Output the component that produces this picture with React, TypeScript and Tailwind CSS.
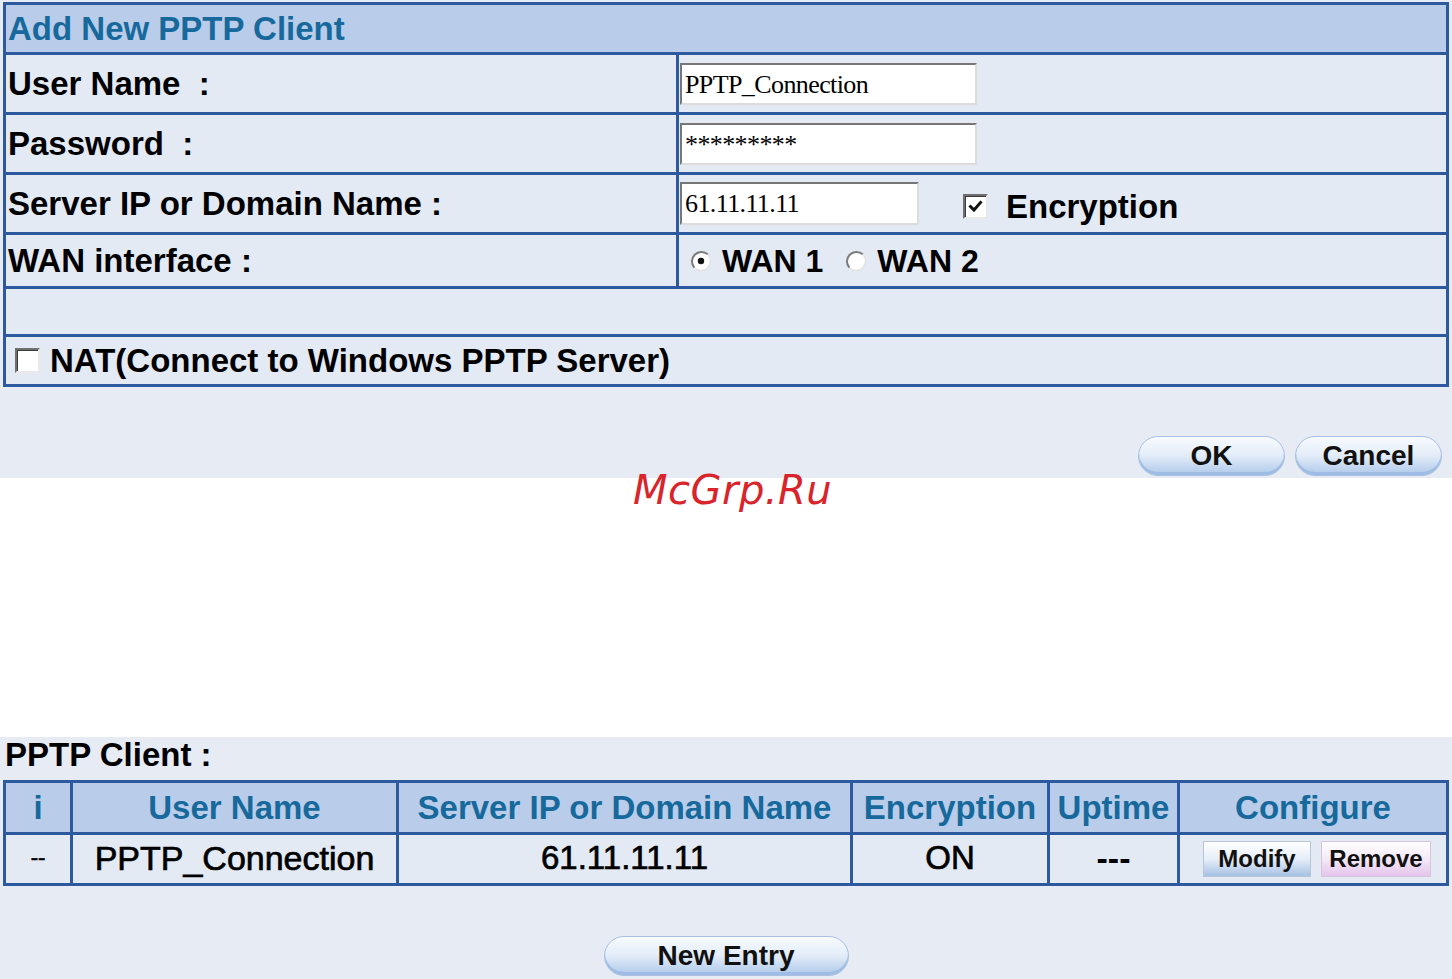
import React from 'react';

const Check = ({ checked = false }: { checked?: boolean }) => (
  <span className="inline-flex items-center justify-center w-[25px] h-[25px] shrink-0 bg-white border-[2px] border-t-[#6f6f6f] border-l-[#6f6f6f] border-b-[#e9e9e9] border-r-[#e9e9e9] shadow-[inset_1px_1px_0_#3a3a3a]">
    {checked && (
      <svg width="17" height="17" viewBox="0 0 17 17">
        <path d="M3.5 8.5 L7 12 L13.5 4.5" fill="none" stroke="#111" strokeWidth="3" strokeLinecap="square" />
      </svg>
    )}
  </span>
);

const Radio = ({ checked = false }: { checked?: boolean }) => (
  <svg width="22" height="22" viewBox="0 0 22 22" className="shrink-0">
    <circle cx="11" cy="11" r="9.5" fill="#fff" stroke="#e3e3e3" strokeWidth="1.5" />
    <path d="M4.3 17.7 A9.5 9.5 0 0 1 17.7 4.3" fill="none" stroke="#7c7c7c" strokeWidth="2" />
    {checked && <circle cx="11" cy="11" r="3.2" fill="#111" />}
  </svg>
);

const Field = ({ value, width, height }: { value: string; width: string; height: string }) => (
  <div
    className={`${width} ${height} bg-white border-[2px] border-t-[#777] border-l-[#777] border-b-[#dcdcdc] border-r-[#dcdcdc] pl-[3px] pt-[7px] leading-none text-[26px] tracking-[-0.6px] text-black font-['Liberation_Serif','Times_New_Roman',serif] whitespace-pre`}
  >
    {value}
  </div>
);

const PillButton = ({ label, width }: { label: string; width: string }) => (
  <button
    className={`${width} h-[40px] rounded-full border border-[#a8c0e2] bg-linear-to-b from-[#f8fbff] via-[#e2ecf8] to-[#aec8ea] text-[28px] font-bold leading-none text-[#111] shadow-[inset_0_-3px_0_#9fbde4]`}
  >
    {label}
  </button>
);

export default function App() {
  return (
    <div className="relative w-[1452px] h-[979px] bg-white font-['Liberation_Sans',Arial,sans-serif] text-black">
      {/* add client form */}
      <div className="bg-[#e6ebf4] pt-[2px] pb-[2px]">
        <div className="mx-[3px] border-[3px] border-[#2d5a9e] bg-[#e3eaf4]">
          <div className="h-[47px] bg-[#b9cdea] flex items-center pl-[2px]">
            <span className="text-[33px] font-bold text-[#17699c]">Add New PPTP Client</span>
          </div>

          <div className="grid grid-cols-[670px_770px]">
            <div className="h-[60px] border-t-[3px] border-[#2d5a9e] flex items-center pl-[2px] text-[33px] font-bold whitespace-pre">User Name  :</div>
            <div className="h-[60px] border-t-[3px] border-l-[3px] border-[#2d5a9e] flex items-center pl-[1px]">
              <Field value="PPTP_Connection" width="w-[297px]" height="h-[42px]" />
            </div>

            <div className="h-[60px] border-t-[3px] border-[#2d5a9e] flex items-center pl-[2px] text-[33px] font-bold whitespace-pre">Password  :</div>
            <div className="h-[60px] border-t-[3px] border-l-[3px] border-[#2d5a9e] flex items-center pl-[1px]">
              <Field value="*********" width="w-[297px]" height="h-[42px]" />
            </div>

            <div className="h-[60px] border-t-[3px] border-[#2d5a9e] flex items-center pl-[2px] text-[33px] font-bold whitespace-pre">Server IP or Domain Name :</div>
            <div className="h-[60px] border-t-[3px] border-l-[3px] border-[#2d5a9e] flex items-center pl-[1px]">
              <Field value="61.11.11.11" width="w-[239px]" height="h-[43px]" />
              <div className="ml-[44px] mt-[6px] flex items-center gap-[18px]">
                <Check checked />
                <span className="text-[33px] font-bold">Encryption</span>
              </div>
            </div>

            <div className="h-[54px] border-t-[3px] border-[#2d5a9e] flex items-center pl-[2px] text-[33px] font-bold whitespace-pre">WAN interface :</div>
            <div className="h-[54px] border-t-[3px] border-l-[3px] border-[#2d5a9e] flex items-center pl-[11px] text-[32px] font-bold">
              <Radio checked />
              <span className="ml-[10px]">WAN 1</span>
              <span className="ml-[22px]"><Radio /></span>
              <span className="ml-[10px]">WAN 2</span>
            </div>
          </div>

          <div className="h-[48px] border-t-[3px] border-[#2d5a9e]" />
          <div className="h-[50px] border-t-[3px] border-[#2d5a9e] flex items-center pl-[9px] gap-[10px]">
            <Check />
            <span className="text-[33px] font-bold">NAT(Connect to Windows PPTP Server)</span>
          </div>
        </div>

        <div className="mt-[49px] flex justify-end gap-[10px] pr-[10px]">
          <PillButton label="OK" width="w-[147px]" />
          <PillButton label="Cancel" width="w-[147px]" />
        </div>
      </div>

      <div className="h-[259px]" />

      {/* client list */}
      <div className="bg-[#e6ebf4] h-[242px]">
        <div className="h-[43px] pl-[5px] pt-[1px] text-[33px] font-bold leading-none">PPTP Client :</div>
        <div className="mx-[3px] border-[3px] border-[#2d5a9e] bg-[#e3eaf4]">
          <div className="grid grid-cols-[64px_326px_454px_197px_130px_269px] h-[49px] bg-[#b9cdea] text-[33px] font-bold text-[#17699c]">
            <div className="flex items-center justify-center">i</div>
            <div className="flex items-center justify-center border-l-[3px] border-[#2d5a9e]">User Name</div>
            <div className="flex items-center justify-center border-l-[3px] border-[#2d5a9e]">Server IP or Domain Name</div>
            <div className="flex items-center justify-center border-l-[3px] border-[#2d5a9e]">Encryption</div>
            <div className="flex items-center justify-center border-l-[3px] border-[#2d5a9e]">Uptime</div>
            <div className="flex items-center justify-center border-l-[3px] border-[#2d5a9e]">Configure</div>
          </div>
          <div className="grid grid-cols-[64px_326px_454px_197px_130px_269px] h-[51px] border-t-[3px] border-[#2d5a9e] text-[34px] leading-none [-webkit-text-stroke:0.7px_#000]">
            <div className="flex items-center justify-center pb-[3px] text-[22px]">--</div>
            <div className="flex items-center justify-center pb-[3px] border-l-[3px] border-[#2d5a9e]">PPTP_Connection</div>
            <div className="flex items-center justify-center pb-[3px] border-l-[3px] border-[#2d5a9e] text-[33px]">61.11.11.11</div>
            <div className="flex items-center justify-center pb-[3px] border-l-[3px] border-[#2d5a9e] text-[33px]">ON</div>
            <div className="flex items-center justify-center pb-[3px] border-l-[3px] border-[#2d5a9e] font-bold [-webkit-text-stroke:0]">---</div>
            <div className="flex items-center border-l-[3px] border-[#2d5a9e] pl-[23px] gap-[10px] [-webkit-text-stroke:0]">
              <button className="w-[108px] h-[36px] border border-[#b9c6d8] bg-linear-to-b from-white via-[#e6eef8] to-[#a6c1e4] text-[24px] font-bold leading-none text-[#111]">Modify</button>
              <button className="w-[110px] h-[36px] border border-[#d9c4de] bg-linear-to-b from-white via-[#f4e9f6] to-[#e4c4ec] text-[24px] font-bold leading-none text-[#111]">Remove</button>
            </div>
          </div>
        </div>
        <div className="mt-[50px] flex justify-center">
          <PillButton label="New Entry" width="w-[245px]" />
        </div>
      </div>

      <div className="absolute left-[633px] top-[470px] text-[40px] leading-none italic text-[#d9242b] font-['DejaVu_Sans',sans-serif] tracking-[0.5px]">
        McGrp.Ru
      </div>
    </div>
  );
}
